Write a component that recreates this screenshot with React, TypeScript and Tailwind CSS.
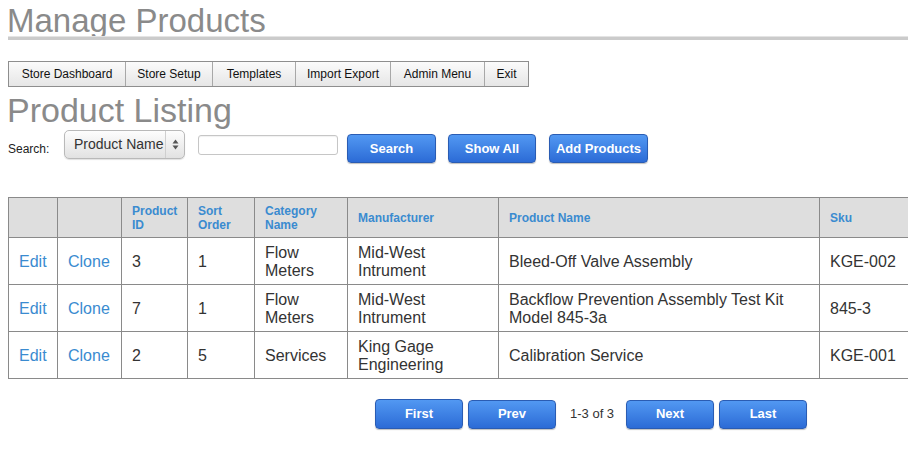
import React from "react";

const menu = [
  { label: "Store Dashboard", w: "w-[117px]" },
  { label: "Store Setup", w: "w-[87px]" },
  { label: "Templates", w: "w-[83px]" },
  { label: "Import Export", w: "w-[95px]" },
  { label: "Admin Menu", w: "w-[94px]" },
  { label: "Exit", w: "w-[43px]" },
];

const headers: string[][] = [
  [],
  [],
  ["Product", "ID"],
  ["Sort", "Order"],
  ["Category", "Name"],
  ["Manufacturer"],
  ["Product Name"],
  ["Sku"],
];

const rows: string[][][] = [
  [["3"], ["1"], ["Flow", "Meters"], ["Mid-West", "Intrument"], ["Bleed-Off Valve Assembly"], ["KGE-002"]],
  [["7"], ["1"], ["Flow", "Meters"], ["Mid-West", "Intrument"], ["Backflow Prevention Assembly Test Kit", "Model 845-3a"], ["845-3"]],
  [["2"], ["5"], ["Services"], ["King Gage", "Engineering"], ["Calibration Service"], ["KGE-001"]],
];

function BlueButton({ label, w, className = "" }: { label: string; w: string; className?: string }) {
  return (
    <button
      className={`${w} ${className} h-[29px] rounded-[4px] border border-[#2a5cb3] bg-gradient-to-b from-[#5298f2] to-[#2c6bd6] text-[13px] font-bold text-white shadow-[0_1px_1px_rgba(0,0,0,0.25)] flex items-center justify-center`}
    >
      {label}
    </button>
  );
}

export default function App() {
  return (
    <div className="w-[908px] h-[453px] overflow-hidden bg-white font-['Liberation_Sans',Arial,sans-serif] text-[#333]">
      <div className="pl-[8px]">
        {/* Title */}
        <div className="h-[36px]">
          <h1 className="pt-[3px] -ml-[1px] text-[33px] leading-[36px] text-[#8a8a8a] font-normal">
            Manage Products
          </h1>
        </div>
        <div className="relative h-[1px] bg-[#e4e4e4]" />
        <div className="relative h-[3px] bg-[#cbcbcb]" />

        {/* Menu */}
        <div className="mt-[21px] flex w-fit border border-[#8e8e8e] bg-gradient-to-b from-[#fbfbfb] to-[#e6e6e6]">
          {menu.map((m, i) => (
            <div
              key={m.label}
              className={`${m.w} h-[24px] flex items-center justify-center text-[12px] text-[#111] ${
                i < menu.length - 1 ? "border-r border-[#a8a8a8]" : ""
              }`}
            >
              {m.label}
            </div>
          ))}
        </div>

        {/* Product Listing */}
        <h2 className="mt-[6px] -ml-[1px] text-[34px] leading-[34px] text-[#8a8a8a] font-normal">
          Product Listing
        </h2>

        {/* Search row */}
        <div className="mt-[2px] flex items-start h-[34px]">
          <div className="w-[56px] mt-[13px] text-[12px] leading-[14px] text-[#222]">Search:</div>
          <div className="mt-[1px] w-[121px] h-[29px] flex rounded-[5px] border border-[#b9b9b9] bg-gradient-to-b from-[#fdfdfd] to-[#e2e2e2] shadow-[0_1px_1px_rgba(0,0,0,0.12)] overflow-hidden">
            <div className="w-[101px] pl-[9px] overflow-hidden whitespace-nowrap text-[14px] leading-[27px] text-[#333] border-r border-[#cfcfcf]">
              Product Name
            </div>
            <div className="flex-1 flex items-center justify-center">
              <svg width="7" height="11" viewBox="0 0 7 11">
                <path d="M3.5 0.5 L6.5 4.5 L0.5 4.5 Z" fill="#555" />
                <path d="M3.5 10.5 L6.5 6.5 L0.5 6.5 Z" fill="#555" />
              </svg>
            </div>
          </div>
          <div className="ml-[13px] mt-[6px] w-[140px] h-[20px] rounded-[3px] border border-[#c6c6c6] bg-white shadow-[inset_0_1px_1px_rgba(0,0,0,0.06)]" />
          <BlueButton label="Search" w="w-[89px]" className="ml-[9px] mt-[5px]" />
          <BlueButton label="Show All" w="w-[88px]" className="ml-[12px] mt-[5px]" />
          <BlueButton label="Add Products" w="w-[99px]" className="ml-[13px] mt-[5px]" />
        </div>

        {/* Table */}
        <div className="mt-[34px] w-fit border-l border-t border-[#8a8a8a] grid grid-cols-[49px_64px_66px_67px_93px_151px_321px_121px]">
          {headers.map((h, i) => (
            <div
              key={`h${i}`}
              className="h-[40px] bg-[#dedede] border-r border-b border-[#8a8a8a] pl-[10px] flex flex-col justify-center text-[12px] leading-[14px] font-bold text-[#3a8bd0]"
            >
              {h.map((l) => (
                <span key={l}>{l}</span>
              ))}
            </div>
          ))}
          {rows.map((r, ri) => (
            <React.Fragment key={`r${ri}`}>
              <div className="h-[47px] border-r border-b border-[#8a8a8a] pl-[10px] pt-[1px] flex items-center text-[16px] leading-[18px] text-[#3a8bd0]">
                Edit
              </div>
              <div className="h-[47px] border-r border-b border-[#8a8a8a] pl-[10px] pt-[1px] flex items-center text-[16px] leading-[18px] text-[#3a8bd0]">
                Clone
              </div>
              {r.map((c, ci) => (
                <div
                  key={ci}
                  className="h-[47px] border-r border-b border-[#8a8a8a] pl-[10px] pt-[1px] flex flex-col justify-center text-[16px] leading-[18px] text-[#333]"
                >
                  {c.map((l) => (
                    <span key={l} className="whitespace-nowrap">
                      {l}
                    </span>
                  ))}
                </div>
              ))}
            </React.Fragment>
          ))}
        </div>

        {/* Pagination */}
        <div className="mt-[20px] pl-[367px] flex items-center">
          <BlueButton label="First" w="w-[88px]" className="h-[30px]" />
          <BlueButton label="Prev" w="w-[88px]" className="ml-[5px]" />
          <span className="ml-[14px] w-[44px] text-[13px] text-[#333] whitespace-nowrap">1-3 of 3</span>
          <BlueButton label="Next" w="w-[88px]" className="ml-[12px]" />
          <BlueButton label="Last" w="w-[88px]" className="ml-[5px]" />
        </div>
      </div>
    </div>
  );
}
